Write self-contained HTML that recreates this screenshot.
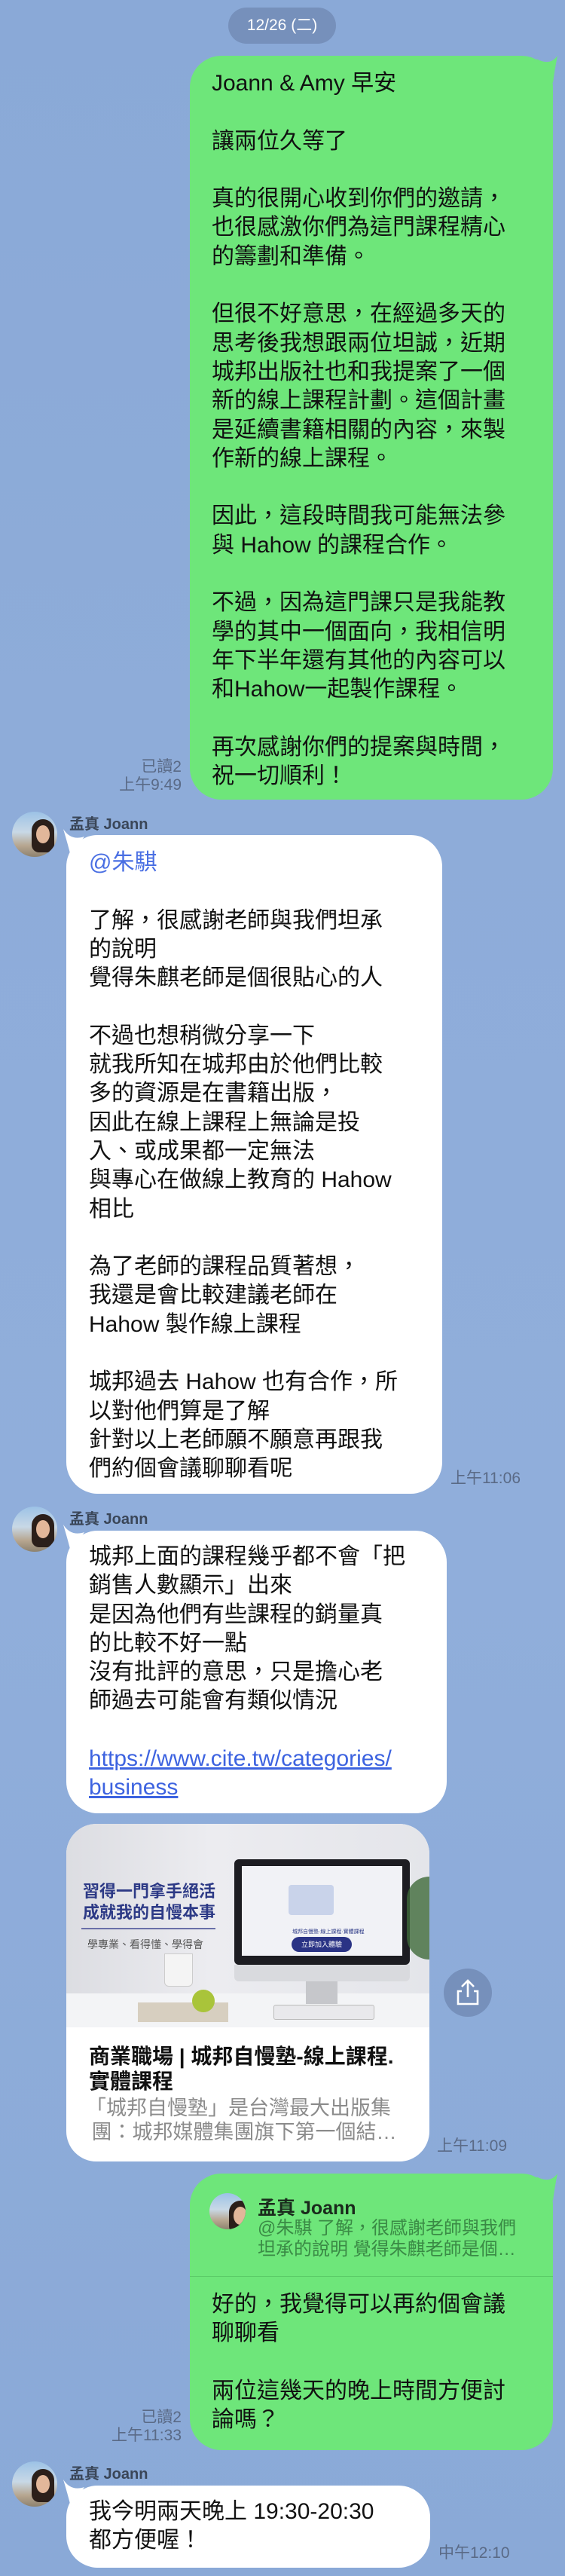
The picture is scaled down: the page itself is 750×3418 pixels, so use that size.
<!DOCTYPE html>
<html><head><meta charset="utf-8"><style>
*{margin:0;padding:0;box-sizing:border-box}
body{width:750px;height:3418px;position:relative;overflow:hidden;background:linear-gradient(180deg,#8aa9d7 0%,#8eacd9 30%,#90aedb 60%,#8aa9d7 100%);font-family:"Liberation Sans","Noto Sans CJK TC",sans-serif}
.a{position:absolute}
.t{position:absolute;font-size:30px;line-height:38.3px;white-space:pre;color:#111}
.g{background:#6ee67a;border-radius:42px}
.w{background:#fff;border-radius:42px}
.meta{position:absolute;font-size:21px;line-height:24px;color:#5a6a86;text-align:right;white-space:pre}
.name{position:absolute;font-size:20px;font-weight:bold;color:#3a4658}
.av{position:absolute;width:60px;height:60px;border-radius:50%;overflow:hidden;background:linear-gradient(180deg,#9cc2e6 0%,#c8d8e6 45%,#b7a690 75%,#8d826f 100%)}
.av::before{content:"";position:absolute;left:26px;top:10px;width:30px;height:44px;border-radius:15px 15px 10px 10px;background:#2b1f1a}
.av::after{content:"";position:absolute;left:32px;top:18px;width:18px;height:24px;border-radius:50%;background:#e2b79a}
</style></head><body>

<div class="a" style="left:303px;top:10px;width:143px;height:48px;border-radius:24px;background:#7690bb;color:#fff;font-size:21px;line-height:48px;text-align:center">12/26 (二)</div>

<svg class="a" style="left:712px;top:74px" width="30" height="40"><path d="M0 4 Q18 14 28 0 Q24 20 22 36 Z" fill="#6ee67a"/></svg>
<div class="a g" style="left:252px;top:74px;width:482px;height:987px"></div>
<div class="t" style="left:281px;top:92px">Joann &amp; Amy 早安

讓兩位久等了

真的很開心收到你們的邀請，
也很感激你們為這門課程精心
的籌劃和準備。

但很不好意思，在經過多天的
思考後我想跟兩位坦誠，近期
城邦出版社也和我提案了一個
新的線上課程計劃。這個計畫
是延續書籍相關的內容，來製
作新的線上課程。

因此，這段時間我可能無法參
與 Hahow 的課程合作。

不過，因為這門課只是我能教
學的其中一個面向，我相信明
年下半年還有其他的內容可以
和Hahow一起製作課程。

再次感謝你們的提案與時間，
祝一切順利！</div>
<div class="meta" style="right:509px;top:1006px">已讀2
上午9:49</div>

<div class="av" style="left:16px;top:1077px"></div>
<div class="name" style="left:92px;top:1077px">孟真 Joann</div>
<svg class="a" style="left:82px;top:1100px" width="30" height="40"><path d="M30 10 Q12 16 2 0 Q8 20 12 36 Z" fill="#fff"/></svg>
<div class="a w" style="left:88px;top:1108px;width:499px;height:874px"></div>
<div class="t" style="left:118px;top:1126px"><span style="color:#4a6fe3">@朱騏</span>

了解，很感謝老師與我們坦承
的說明
覺得朱麒老師是個很貼心的人

不過也想稍微分享一下
就我所知在城邦由於他們比較
多的資源是在書籍出版，
因此在線上課程上無論是投
入、或成果都一定無法
與專心在做線上教育的 Hahow
相比

為了老師的課程品質著想，
我還是會比較建議老師在
Hahow 製作線上課程

城邦過去 Hahow 也有合作，所
以對他們算是了解
針對以上老師願不願意再跟我
們約個會議聊聊看呢</div>
<div class="meta" style="left:598px;top:1950px;text-align:left">上午11:06</div>

<div class="av" style="left:16px;top:1999px"></div>
<div class="name" style="left:92px;top:1999px">孟真 Joann</div>
<svg class="a" style="left:82px;top:2023px" width="30" height="40"><path d="M30 10 Q12 16 2 0 Q8 20 12 36 Z" fill="#fff"/></svg>
<div class="a w" style="left:88px;top:2031px;width:505px;height:375px"></div>
<div class="t" style="left:118px;top:2047px">城邦上面的課程幾乎都不會「把
銷售人數顯示」出來
是因為他們有些課程的銷量真
的比較不好一點
沒有批評的意思，只是擔心老
師過去可能會有類似情況

<span style="color:#3d63e0;text-decoration:underline">https://www.cite.tw/categories/
business</span></div>

<div class="a" style="left:88px;top:2420px;width:482px;height:448px;border-radius:40px;overflow:hidden;background:#fff">
  <div class="a" style="left:0;top:0;width:482px;height:270px;background:linear-gradient(90deg,#dcdde2,#ececf0 40%,#e4e5ea)"></div>
  <div class="a" style="left:0;top:225px;width:482px;height:45px;background:#f3f4f6"></div>
  <div class="a" style="left:22px;top:76px;font-size:22px;line-height:28px;font-weight:bold;color:#2d3a86;white-space:pre">習得一門拿手絕活
成就我的自慢本事</div>
  <div class="a" style="left:20px;top:138px;width:178px;height:2px;background:#6a70a8"></div>
  <div class="a" style="left:28px;top:150px;font-size:14px;color:#555">學專業、看得懂、學得會</div>
  <div class="a" style="left:223px;top:47px;width:233px;height:140px;background:#1d1d22;border-radius:6px"></div>
  <div class="a" style="left:233px;top:56px;width:213px;height:119px;background:#f1f2f6"></div>
  <div class="a" style="left:295px;top:81px;width:60px;height:40px;border-radius:4px;background:#c9d3ea"></div>
  <div class="a" style="left:300px;top:138px;font-size:7px;color:#2d3a86">城邦自慢塾·線上課程·實體課程</div>
  <div class="a" style="left:299px;top:150px;width:80px;height:20px;border-radius:10px;background:#2a3385;color:#fff;font-size:9px;line-height:20px;text-align:center">立即加入體驗</div>
  <div class="a" style="left:223px;top:187px;width:233px;height:22px;background:#d9dade;border-radius:0 0 6px 6px"></div>
  <div class="a" style="left:318px;top:209px;width:42px;height:30px;background:#c6c7cb"></div>
  <div class="a" style="left:275px;top:240px;width:134px;height:20px;background:#e9e9ec;border:1px solid #bbb;border-radius:3px"></div>
  <div class="a" style="left:95px;top:237px;width:120px;height:26px;background:#d7cfc0"></div>
  <div class="a" style="left:130px;top:172px;width:38px;height:44px;background:#f4f4f4;border-radius:0 0 6px 6px;border:1px solid #ccc"></div>
  <div class="a" style="left:167px;top:220px;width:30px;height:30px;border-radius:50%;background:#a9c43a"></div>
  <div class="a" style="left:452px;top:70px;width:30px;height:110px;background:#3e6a3a;border-radius:30px 0 0 30px;opacity:.8"></div>
  <div class="a" style="left:30px;top:292px;font-size:28px;line-height:33px;font-weight:bold;color:#111;white-space:pre">商業職場 | 城邦自慢塾-線上課程.
實體課程</div>
  <div class="a" style="left:26px;top:361px;font-size:27px;line-height:32px;color:#8b8b8b;white-space:pre">「城邦自慢塾」是台灣最大出版集
 團：城邦媒體集團旗下第一個結…</div>
</div>
<div class="a" style="left:589px;top:2612px;width:64px;height:64px;border-radius:50%;background:#7690bb"></div>
<svg class="a" style="left:589px;top:2612px" width="64" height="64"><path d="M32 17 V38 M24 24 L32 16 L40 24 M24 30 H19 V47 H45 V30 H40" fill="none" stroke="#fff" stroke-width="2.6"/></svg>
<div class="meta" style="left:580px;top:2836px;text-align:left">上午11:09</div>

<svg class="a" style="left:712px;top:2884px" width="30" height="40"><path d="M0 4 Q18 14 28 0 Q24 20 22 36 Z" fill="#6ee67a"/></svg>
<div class="a g" style="left:252px;top:2884px;width:482px;height:367px;overflow:hidden">
  <div class="a" style="left:0;top:136px;width:482px;height:1px;background:#5ccb68"></div>
</div>
<div class="av" style="left:278px;top:2910px;width:48px;height:48px"></div>
<div class="a" style="left:342px;top:2910px;font-size:25px;font-weight:bold;color:#1a2a1c">孟真 Joann</div>
<div class="a" style="left:342px;top:2943px;font-size:24px;line-height:28px;color:#3a8a45;white-space:pre">@朱騏 了解，很感謝老師與我們
坦承的說明 覺得朱麒老師是個…</div>
<div class="t" style="left:281px;top:3039px">好的，我覺得可以再約個會議
聊聊看

兩位這幾天的晚上時間方便討
論嗎？</div>
<div class="meta" style="right:509px;top:3196px">已讀2
上午11:33</div>

<div class="av" style="left:16px;top:3266px"></div>
<div class="name" style="left:92px;top:3266px">孟真 Joann</div>
<svg class="a" style="left:82px;top:3290px" width="30" height="40"><path d="M30 10 Q12 16 2 0 Q8 20 12 36 Z" fill="#fff"/></svg>
<div class="a w" style="left:88px;top:3298px;width:483px;height:109px"></div>
<div class="t" style="left:118px;top:3314px">我今明兩天晚上 19:30-20:30
都方便喔！</div>
<div class="meta" style="left:582px;top:3376px;text-align:left">中午12:10</div>
</body></html>
